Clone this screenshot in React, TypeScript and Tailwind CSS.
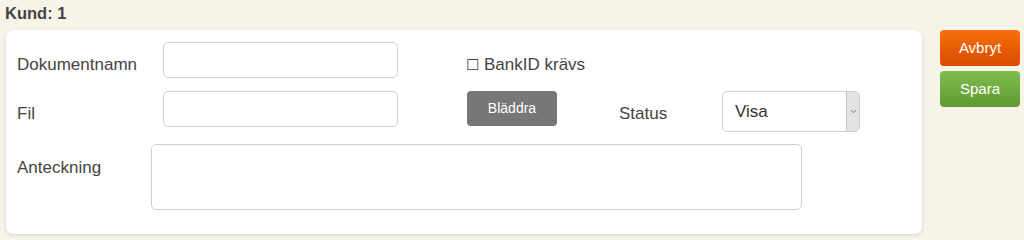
import React from 'react';

const font = { fontFamily: '"Liberation Sans", Arial, sans-serif' };

const TextInput = ({ className = '' }: { className?: string }) => (
  <input
    type="text"
    className={`border border-[#cfcfcf] rounded-[5px] bg-white outline-none ${className}`}
  />
);

// Select box with the grey arrow strip on the right
const StatusSelect = () => (
  <div className="flex w-[138px] h-[41px] border border-[#cfcfcf] rounded-[5px] bg-white overflow-hidden">
    <div className="flex-1 flex items-center pl-[12px] text-[17px] text-[#333]">Visa</div>
    <div className="w-[13px] bg-[#e3e3e3] border-l border-[#c4c4c4] flex items-center justify-center">
      <svg width="7" height="5" viewBox="0 0 7 5" fill="none">
        <path d="M1 1.2l2.5 2.5L6 1.2" stroke="#666" strokeWidth="1" />
      </svg>
    </div>
  </div>
);

const App: React.FC = () => {
  return (
    <div className="w-[1024px] h-[240px] bg-[#f7f3e8] overflow-hidden" style={font}>
      <div className="pl-[5px] pt-[3px] h-[30px] text-[16.5px] font-bold text-[#444] leading-[20px]">Kund: 1</div>

      <div className="flex items-start">
        {/* Form card */}
        <div className="ml-[6px] w-[916px] h-[204px] bg-white rounded-[7px] shadow-[0_1px_3px_rgba(120,100,60,0.25)] pt-[12px] pl-[11px]">
          <div className="flex items-start h-[36px]">
            <div className="w-[146px] text-[17px] text-[#444] pt-[10px]">Dokumentnamn</div>
            <TextInput className="w-[235px] h-[36px]" />
            <div className="ml-[68px] pt-[10px] flex items-center text-[17px] text-[#444]">
              <span className="text-[15px] mr-[5px]">☐</span>BankID krävs
            </div>
          </div>

          <div className="flex items-start mt-[13px] h-[41px]">
            <div className="w-[146px] text-[17px] text-[#444] pt-[10px]">Fil</div>
            <TextInput className="w-[235px] h-[36px]" />
            <button className="ml-[69px] w-[90px] h-[35px] bg-[#777] rounded-[4px] text-white text-[14px]">
              Bläddra
            </button>
            <div className="ml-[62px] w-[103px] text-[17px] text-[#444] pt-[10px]">Status</div>
            <StatusSelect />
          </div>

          <div className="flex items-start mt-[12px]">
            <div className="w-[134px] text-[17px] text-[#444] pt-[11px]">Anteckning</div>
            <textarea className="w-[651px] h-[66px] border border-[#cfcfcf] rounded-[5px] resize-none outline-none" />
          </div>
        </div>

        {/* Actions */}
        <div className="ml-[18px] flex flex-col gap-[5px]">
          <button className="w-[80px] h-[36px] rounded-[4px] bg-gradient-to-b from-[#f7700e] to-[#d84a00] text-white text-[15px]">
            Avbryt
          </button>
          <button className="w-[80px] h-[36px] rounded-[4px] bg-gradient-to-b from-[#80bd4e] to-[#5f9a31] text-white text-[15px]">
            Spara
          </button>
        </div>
      </div>
    </div>
  );
};

export default App;
